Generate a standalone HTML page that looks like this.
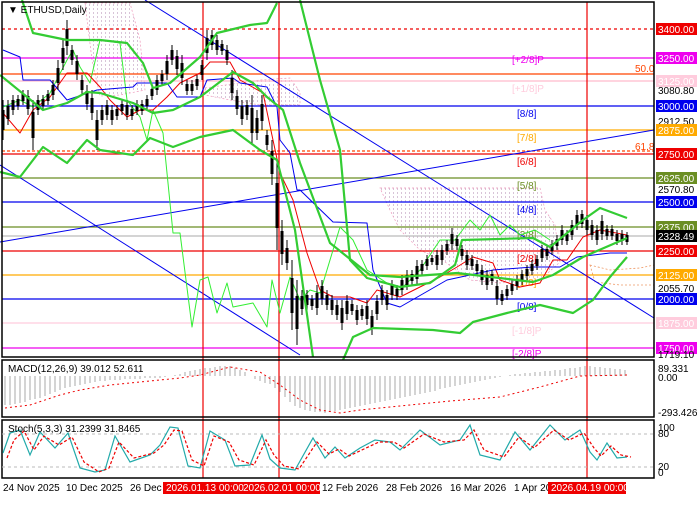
<!DOCTYPE html>
<html><head><meta charset="utf-8"><style>
body{margin:0;background:#fff;width:700px;height:500px;overflow:hidden;font-family:"Liberation Sans",sans-serif}
svg text{font-family:"Liberation Sans",sans-serif;font-size:10px}
</style></head><body>
<svg width="700" height="500" xmlns="http://www.w3.org/2000/svg">
<defs>
<pattern id="dots" width="4" height="4" patternUnits="userSpaceOnUse"><rect x="1" y="0" width="1" height="2" fill="#d8c4d8"/></pattern>
</defs>
<rect width="700" height="500" fill="#fff"/>
<!-- cloud -->
<path d="M85,3 L130,3 L140,40 L145,90 L120,95 L100,96 L92,60 Z" fill="url(#dots)" stroke="#e9b" stroke-dasharray="2,2" stroke-width="0.7"/>
<path d="M205,88 L260,80 L290,78 L300,92 L300,105 L260,105 L230,100 L205,95 Z" fill="url(#dots)" stroke="#e9b" stroke-dasharray="2,2" stroke-width="0.7"/>
<path d="M380,188 L540,188 L545,210 L555,225 L560,262 L540,280 L500,283 L470,280 L445,262 L420,250 L400,230 L390,210 Z" fill="url(#dots)" stroke="#e9b" stroke-dasharray="2,2" stroke-width="0.7"/>
<path d="M590,265 L610,270 L640,268 L654,265 L654,285 L620,285 L595,282 Z" fill="none" stroke="#e96" stroke-dasharray="2,2" stroke-width="0.8"/>
<g stroke-width="1.2">
<line x1="2" x2="654" y1="29" y2="29" stroke="#e00" stroke-dasharray="3,3"/>
<line x1="2" x2="654" y1="58" y2="58" stroke="#e0e"/>
<line x1="2" x2="654" y1="74" y2="74" stroke="#f40"/>
<line x1="2" x2="654" y1="81" y2="81" stroke="#fbc"/>
<line x1="2" x2="654" y1="106" y2="106" stroke="#00e"/>
<line x1="2" x2="654" y1="130" y2="130" stroke="#fa0"/>
<line x1="2" x2="654" y1="151" y2="151" stroke="#f40" stroke-dasharray="3,2"/>
<line x1="2" x2="654" y1="154" y2="154" stroke="#e00"/>
<line x1="2" x2="654" y1="178" y2="178" stroke="#6b8e23"/>
<line x1="2" x2="654" y1="202" y2="202" stroke="#00e"/>
<line x1="2" x2="654" y1="227" y2="227" stroke="#6b8e23"/>
<line x1="2" x2="654" y1="236" y2="236" stroke="#bbb"/>
<line x1="2" x2="654" y1="251" y2="251" stroke="#e00"/>
<line x1="2" x2="654" y1="275" y2="275" stroke="#fa0"/>
<line x1="2" x2="654" y1="299" y2="299" stroke="#00e"/>
<line x1="2" x2="654" y1="323" y2="323" stroke="#fcd"/>
<line x1="2" x2="654" y1="348" y2="348" stroke="#e0e"/>
</g>
<g font-size="10">
<text x="512" y="63" fill="#e0e">[+2/8]P</text>
<text x="635" y="72" fill="#f40">50.0</text>
<text x="512" y="92" fill="#fcd">[+1/8]P</text>
<text x="517" y="117" fill="#00e">[8/8]</text>
<text x="517" y="141" fill="#fa0">[7/8]</text>
<text x="635" y="150" fill="#f40">61.8</text>
<text x="517" y="165" fill="#e00">[6/8]</text>
<text x="517" y="189" fill="#6b8e23">[5/8]</text>
<text x="517" y="213" fill="#00e">[4/8]</text>
<text x="517" y="238" fill="#6b8e23">[3/8]</text>
<text x="517" y="262" fill="#e00">[2/8]</text>
<text x="517" y="286" fill="#fa0">[1/8]</text>
<text x="517" y="310" fill="#00e">[0/8]</text>
<text x="512" y="334" fill="#fcd">[-1/8]P</text>
<text x="512" y="357" fill="#e0e">[-2/8]P</text>
</g>
<line x1="145" y1="0" x2="654" y2="318" stroke="#00e"/>
<line x1="0" y1="165" x2="300" y2="355" stroke="#00e"/>
<line x1="0" y1="242" x2="654" y2="130" stroke="#00e"/>
<g stroke="#e00" stroke-width="1.2">
<line x1="203" x2="203" y1="2" y2="478"/>
<line x1="279" x2="279" y1="2" y2="478"/>
<line x1="587" x2="587" y1="2" y2="478"/>
</g>
<!-- thin indicator lines -->
<g fill="none" stroke-linejoin="round">
<polyline stroke="#3e3" stroke-width="1" points="3,107 20,100 33,107 50,93 67,60 73,50 80,67 90,83 100,40 120,43 127,100 140,117 147,140 153,110 163,133 173,233 180,233 192,327 200,280 208,277 217,313 227,283 233,307 253,303 267,327 272,280 280,313 290,277 300,300 310,290 320,293 340,227 353,240 367,270 387,283 400,290 420,270 440,240 455,240 470,220 480,230 490,215 500,235 510,225 520,235 535,230 550,240"/>
<polyline stroke="#e00" stroke-width="1" points="3,113 20,133 33,110 50,97 67,73 87,73 100,87 110,100 127,117 140,110 153,110 167,97 180,83 200,73 210,62 230,62 240,80 263,93 280,173 293,200 307,253 320,290 333,297 350,297 367,303 377,290 400,297 420,287 440,277 457,267 473,257 493,263 500,280 520,287 540,283 553,260 567,260 583,237 600,230 627,235"/>
<polyline stroke="#00e" stroke-width="1" points="3,50 20,57 23,80 50,80 67,100 97,90 133,87 137,83 167,83 177,97 200,97 207,80 233,78 240,83 267,87 277,107 280,140 290,153 297,190 300,190 333,222 367,223 373,270 387,303 400,307 447,280 493,270 533,267 560,267 577,257 610,253 627,253"/>
</g>
<!-- candles -->
<path stroke="#000" stroke-width="1" fill="none" d="M3,100V140M8,100V125M13,95V115M18,95V110M23,90V105M28,90V115M33,100V150M38,95V115M43,95V110M48,90V105M53,80V100M58,60V90M63,40V70M67,20V55M72,45V65M77,55V80M82,75V95M87,85V110M92,90V120M97,110V150M102,105V125M107,100V120M112,105V125M117,105V120M122,100V115M127,100V120M132,105V120M137,100V115M142,100V115M147,95V110M152,85V100M157,75V95M162,70V85M167,55V80M172,45V65M177,50V75M182,55V85M187,80V95M192,80V95M197,75V90M202,60V80M207,30V60M212,30V50M217,35V55M222,40V55M227,45V65M232,70V100M237,90V115M242,100V125M247,100V120M252,95V145M257,110V140M262,95V130M267,130V150M272,140V185M277,160V250M282,220V265M287,240V270M292,260V330M297,280V345M302,290V315M307,290V310M312,295V310M317,285V315M322,280V305M327,290V310M332,295V315M337,300V320M342,300V330M347,295V320M352,300V315M357,305V325M362,305V320M367,300V325M372,310V335M377,295V320M382,285V305M387,290V310M392,280V300M397,285V300M402,275V295M407,270V290M412,270V285M417,260V285M422,260V275M427,255V270M432,255V265M437,250V270M442,245V265M447,240V255M452,228V250M457,235V250M462,245V260M467,250V270M472,255V270M477,260V275M482,265V285M487,270V290M492,270V285M497,280V305M502,290V305M507,285V300M512,280V295M517,275V290M522,270V285M527,265V280M532,260V275M537,255V270M542,245V262M547,245V260M552,240V255M557,235V250M562,225V245M567,230V245M572,220V240M577,210V230M582,210V228M587,215V235M592,220V240M597,225V245M602,215V240M607,225V240M612,225V240M617,230V245M622,230V245M627,232V245"/>
<path stroke="#000" stroke-width="3" fill="none" d="M3,110V130M8,106V119M13,100V110M18,99V106M23,94V101M28,96V109M33,112V138M38,100V110M43,99V106M48,94V101M53,85V95M58,68V83M63,48V63M67,29V46M72,50V60M77,61V74M82,80V90M87,91V104M92,98V113M97,120V140M102,110V120M107,105V115M112,110V120M117,109V116M122,104V111M127,105V115M132,109V116M137,104V111M142,104V111M147,99V106M152,89V96M157,80V90M162,74V81M167,61V74M172,50V60M177,56V69M182,63V78M187,84V91M192,84V91M197,79V86M202,65V75M207,38V53M212,35V45M217,40V50M222,44V51M227,50V60M232,78V93M237,96V109M242,106V119M247,105V115M252,108V133M257,118V133M262,104V121M267,135V145M272,151V174M277,183V228M282,231V254M287,248V263M292,278V313M297,296V329M302,296V309M307,295V305M312,299V306M317,293V308M322,286V299M327,295V305M332,300V310M337,305V315M342,308V323M347,301V314M352,304V311M357,310V320M362,309V316M367,306V319M372,316V329M377,301V314M382,290V300M387,295V305M392,285V295M397,289V296M402,280V290M407,275V285M412,274V281M417,266V279M422,264V271M427,259V266M432,258V262M437,255V265M442,250V260M447,244V251M452,234V244M457,239V246M462,249V256M467,255V265M472,259V266M477,264V271M482,270V280M487,275V285M492,274V281M497,286V299M502,294V301M507,289V296M512,284V291M517,279V286M522,274V281M527,269V276M532,264V271M537,259V266M542,249V258M547,249V256M552,244V251M557,239V246M562,230V240M567,234V241M572,225V235M577,215V225M582,214V224M587,220V230M592,225V235M597,230V240M602,221V234M607,229V236M612,229V236M617,234V241M622,234V241M627,235V242"/>
<!-- bands -->
<g fill="none" stroke-linejoin="round" stroke="#3c3" stroke-width="2.2">
<polyline points="22,0 33,33 67,40 100,40 127,43 143,63 153,88 170,83 200,57 217,33 250,25 267,23 277,3"/>
<polyline points="300,0 320,80 340,150 350,260 367,278 400,287 430,283 455,265 462,240 533,238 550,247 583,220 600,208 627,218"/>
<polyline points="0,75 43,110 67,103 87,92 100,93 133,103 153,113 173,110 200,97 233,72 253,83 267,97 283,110 300,163 330,243 370,275 400,277 457,273 533,282 553,275 583,257 627,238"/>
<polyline points="0,172 20,177 43,147 67,163 87,140 100,150 133,155 150,138 173,147 200,137 233,130 260,150 277,160 295,230 313,357"/>
<polyline points="343,360 353,337 373,328 433,330 460,333 473,322 507,313 540,305 573,313 593,300 610,277 627,257"/>
</g>
<g fill="none" stroke="#000" stroke-width="1.5">
<rect x="2" y="2" width="652" height="355"/>
<rect x="2" y="360" width="652" height="57"/>
<rect x="2" y="420" width="652" height="58"/>
</g>
<!-- MACD -->
<path stroke="#aaa" fill="none" d="M5,376V405M10,376V405M15,376V404M20,376V403M25,376V402M30,376V400M35,376V399M40,376V398M45,376V396M50,376V394M55,376V392M60,376V390M65,376V388M70,376V387M75,376V386M80,376V385M85,376V384M90,376V383M95,376V382M100,376V381M105,376V381M110,376V380M115,376V380M120,376V380M125,376V379M130,376V379M135,376V379M140,376V379M145,376V378M150,376V378M155,376V378M160,376V378M165,376V377M170,376V376M175,376V375M180,376V374M185,376V372M190,376V371M195,376V370M200,376V369M205,376V368M210,376V368M215,376V367M220,376V366M225,376V366M230,376V366M235,376V368M240,376V370M245,376V372M250,376V376M255,376V379M260,376V381M265,376V383M270,376V384M275,376V388M280,376V392M285,376V397M290,376V402M295,376V406M300,376V408M305,376V410M310,376V411M315,376V412M320,376V412M325,376V413M330,376V412M335,376V411M340,376V410M345,376V409M350,376V408M355,376V407M360,376V406M365,376V405M370,376V404M375,376V403M380,376V402M385,376V401M390,376V400M395,376V399M400,376V398M405,376V397M410,376V396M415,376V395M420,376V394M425,376V393M430,376V392M435,376V391M440,376V389M445,376V388M450,376V387M455,376V386M460,376V385M465,376V384M470,376V383M475,376V382M480,376V381M485,376V380M490,376V379M495,376V378M500,376V377M505,376V376M510,376V375M515,376V374M520,376V374M525,376V373M530,376V373M535,376V372M540,376V372M545,376V371M550,376V371M555,376V370M560,376V370M565,376V369M570,376V368M575,376V368M580,376V367M585,376V366M590,376V366M595,376V367M600,376V367M605,376V368M610,376V368M615,376V369M620,376V369M625,376V370"/>
<polyline fill="none" stroke="#e00" stroke-dasharray="2,3" points="5,408 30,405 60,395 80,390 110,385 140,382 180,378 200,375 230,367 260,372 280,385 300,400 320,410 340,413 360,410 400,406 450,401 500,397 540,387 580,376 627,375"/>
<!-- Stoch -->
<line x1="2" x2="654" y1="434" y2="434" stroke="#bbb" stroke-dasharray="3,3"/>
<line x1="2" x2="654" y1="467" y2="467" stroke="#bbb" stroke-dasharray="3,3"/>
<polyline fill="none" stroke="#2aa" stroke-width="1.2" points="3,453 10,433 20,430 30,455 40,432 55,448 68,433 80,468 95,472 105,470 115,436 130,462 150,455 160,445 170,427 178,428 188,466 200,468 210,431 225,440 235,466 250,465 262,435 270,459 280,468 295,470 313,438 325,458 335,447 345,458 360,448 375,440 390,442 400,450 420,430 440,445 460,440 470,425 480,455 500,460 515,432 530,450 550,425 565,440 580,430 590,452 597,460 607,443 617,458 627,457"/>
<polyline fill="none" stroke="#e00" stroke-width="1.2" stroke-dasharray="3,2" points="7,458 14,440 24,431 34,450 44,436 59,445 72,437 84,462 99,472 109,468 119,442 134,458 154,453 164,445 174,430 182,431 192,460 204,466 214,436 229,442 239,460 254,465 266,440 274,455 284,466 299,469 317,442 329,454 339,449 349,456 364,449 379,442 394,442 404,448 424,434 444,442 464,440 474,430 484,450 504,457 519,437 534,448 554,430 569,440 584,433 594,448 601,456 611,446 621,455 631,457"/>
<text x="8" y="13" fill="#000">▼ ETHUSD,Daily</text>
<text x="8" y="372" fill="#000">MACD(12,26,9) 39.012 52.611</text>
<text x="8" y="432" fill="#000">Stoch(5,3,3) 31.2399 31.8465</text>
<g font-size="10">
<rect x="656" y="23" width="41" height="12" fill="#e00"/><text x="658" y="33" fill="#fff">3400.00</text>
<rect x="656" y="52" width="41" height="12" fill="#e0e"/><text x="658" y="62" fill="#fff">3250.00</text>
<rect x="656" y="75" width="41" height="12" fill="#fcd"/><text x="658" y="85" fill="#fff">3125.00</text>
<text x="658" y="94" fill="#000">3080.80</text>
<rect x="656" y="100" width="41" height="12" fill="#00e"/><text x="658" y="110" fill="#fff">3000.00</text>
<text x="658" y="125" fill="#000">2912.50</text>
<rect x="656" y="124" width="41" height="12" fill="#fa0"/><text x="658" y="134" fill="#fff">2875.00</text>
<rect x="656" y="148" width="41" height="12" fill="#e00"/><text x="658" y="158" fill="#fff">2750.00</text>
<rect x="656" y="172" width="41" height="12" fill="#6b8e23"/><text x="658" y="182" fill="#fff">2625.00</text>
<text x="658" y="193" fill="#000">2570.80</text>
<rect x="656" y="196" width="41" height="12" fill="#00e"/><text x="658" y="206" fill="#fff">2500.00</text>
<rect x="656" y="221" width="41" height="12" fill="#6b8e23"/><text x="658" y="231" fill="#fff">2375.00</text>
<rect x="656" y="230" width="41" height="12" fill="#000"/><text x="658" y="240" fill="#fff">2328.49</text>
<rect x="656" y="245" width="41" height="12" fill="#e00"/><text x="658" y="255" fill="#fff">2250.00</text>
<rect x="656" y="269" width="41" height="12" fill="#fa0"/><text x="658" y="279" fill="#fff">2125.00</text>
<text x="658" y="292" fill="#000">2055.70</text>
<rect x="656" y="293" width="41" height="12" fill="#00e"/><text x="658" y="303" fill="#fff">2000.00</text>
<rect x="656" y="317" width="41" height="12" fill="#fcd"/><text x="658" y="327" fill="#fff">1875.00</text>
<rect x="656" y="342" width="41" height="12" fill="#e0e"/><text x="658" y="352" fill="#fff">1750.00</text>
<text x="658" y="358" fill="#000">1719.10</text>
<text x="658" y="372" fill="#000">89.331</text>
<text x="658" y="381" fill="#000">0.00</text>
<text x="658" y="416" fill="#000">-293.426</text>
<text x="658" y="431" fill="#000">100</text>
<text x="658" y="437" fill="#000">80</text>
<text x="658" y="470" fill="#000">20</text>
<text x="658" y="476" fill="#000">0</text>
</g>
<g font-size="10" fill="#000">
<text x="3" y="491">24 Nov 2025</text>
<text x="66" y="491">10 Dec 2025</text>
<text x="130" y="491">26 Dec 2</text>
<rect x="163" y="482" width="157" height="12" fill="#e00"/>
<text x="166" y="491" fill="#fff">2026.01.13 00:00</text>
<text x="243" y="491" fill="#fff">2026.02.01 00:00</text>
<text x="322" y="491">12 Feb 2026</text>
<text x="386" y="491">28 Feb 2026</text>
<text x="450" y="491">16 Mar 2026</text>
<text x="514" y="491">1 Apr 20</text>
<rect x="548" y="482" width="78" height="12" fill="#e00"/>
<text x="551" y="491" fill="#fff">2026.04.19 00:00</text>
</g>
</svg>
</body></html>
